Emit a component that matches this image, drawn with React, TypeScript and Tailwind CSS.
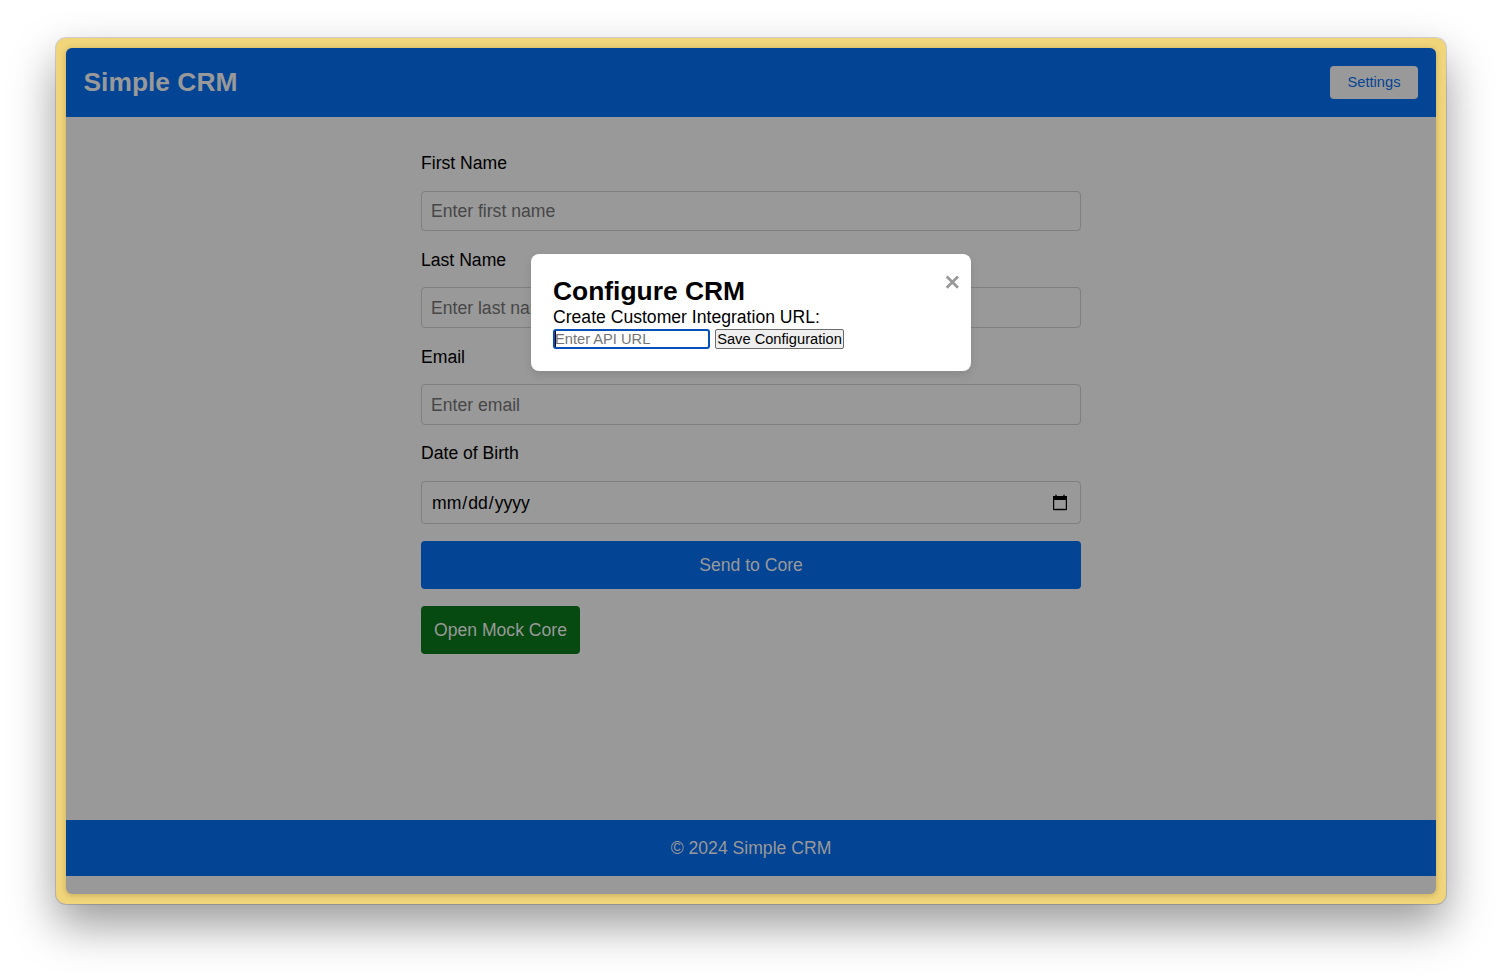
type FieldProps = {
  label: string;
  placeholder: string;
  labelClass: string;
  inputClass: string;
};

function Field({ label, placeholder, labelClass, inputClass }: FieldProps) {
  return (
    <div className="flex flex-col">
      <label className={`block leading-5 text-black ${labelClass}`}>{label}</label>
      <input
        type="text"
        placeholder={placeholder}
        className={`w-full rounded-[4px] border border-[#7f7f7f] bg-[#999999] px-[9px] text-[17.6px] placeholder:text-[#474747] outline-none ${inputClass}`}
      />
    </div>
  );
}

function CalendarIcon() {
  return (
    <svg width="16" height="18" viewBox="0 0 16 18" fill="none" shapeRendering="crispEdges">
      <path d="M3 0h2v1H3zM11 0h2v1h-2z" fill="#777" />
      <path d="M3 1h2v1H3zM11 1h2v1h-2z" fill="#333" />
      <path d="M1 2h14v4H1z" fill="#000" />
      <path d="M1 6h1v10H1zM14 6h1v10h-1zM1 15h14v1H1z" fill="#000" />
      <path d="M2 6h1v9H2zM13 6h1v9h-1zM2 14h12v1H2zM2 16h12v1H2z" fill="#777" />
    </svg>
  );
}

function ConfigureDialog() {
  return (
    <div
      role="dialog"
      className="absolute left-[465px] top-[206px] h-[117px] w-[440px] rounded-[8px] bg-white px-[22px] pt-[22px] text-black shadow-[0_4px_9px_rgba(0,0,0,0.1)]"
    >
      <h2 className="h-[31px] text-[26.4px] font-bold leading-[30px]">Configure CRM</h2>
      <label className="block h-[22px] text-[17.6px] leading-5">Create Customer Integration URL:</label>
      <div className="flex gap-[5px]">
        <div className="flex h-5 w-[157px] items-center rounded-[3px] border-2 border-[#0550b8] bg-white">
          <span className="h-4 w-px shrink-0 bg-black" />
          <input
            type="text"
            placeholder="Enter API URL"
            className="-ml-px h-4 w-full min-w-0 text-[14.667px] leading-4 placeholder:text-[#757575] outline-none"
          />
        </div>
        <button className="h-5 w-[129px] whitespace-nowrap rounded-[2px] border border-[#6b6b6b] bg-[#efefef] text-[14.667px] leading-[18px]">
          Save Configuration
        </button>
      </div>
      <button aria-label="Close" className="absolute right-[12px] top-[21px] flex size-[14px] items-center justify-center">
        <svg width="14" height="14" viewBox="0 0 14 14" fill="none" stroke="#999" strokeWidth="2.7">
          <path d="M1.7 1.5 13 12.8M13 1.5 1.7 12.8" />
        </svg>
      </button>
    </div>
  );
}

export default function App() {
  return (
    <div className="h-[978px] w-[1502px] overflow-hidden bg-white px-14 pt-[38px] font-['Liberation_Sans',Arial,sans-serif] text-[17.6px]">
      <div className="h-[866px] w-[1390px] rounded-[10px] bg-[#f1d57a] p-[10px] shadow-[0_0_0_1px_rgba(0,0,0,0.15),0_21px_46px_rgba(0,0,0,0.4)]">
        <div className="relative flex h-[846px] flex-col overflow-hidden rounded-[6px] bg-[#999999] shadow-[0_1px_6px_rgba(0,0,0,0.2)]">
          <header className="flex h-[69px] shrink-0 items-center justify-between bg-[#044495] px-[18px]">
            <h1 className="-ml-[0.5px] pb-px text-[26.4px] font-bold leading-[30px] text-[#999999]">Simple CRM</h1>
            <button className="h-[33px] w-[88px] rounded-[4px] bg-[#999999] pb-[2px] text-[14.667px] text-[#044495]">Settings</button>
          </header>

          <main className="flex flex-1 flex-col items-center pt-9">
            <form className="flex w-[660px] flex-col">
              <Field label="First Name" placeholder="Enter first name" labelClass="mb-[18px]" inputClass="h-10" />
              <Field label="Last Name" placeholder="Enter last name" labelClass="mt-[19px] mb-[17px]" inputClass="h-[41px] pt-[2px]" />
              <Field label="Email" placeholder="Enter email" labelClass="mt-[19px] mb-[17px]" inputClass="h-[41px] pt-[2px]" />
              <label className="mb-[18px] mt-[18px] block leading-5 text-black">Date of Birth</label>
              <div className="flex h-[43px] items-center justify-between rounded-[4px] border border-[#7f7f7f] pl-[10px] pr-3 text-black">
                <span className="flex pt-[2px]">
                  <span>mm</span>
                  <span className="px-px">/</span>
                  <span>dd</span>
                  <span className="px-px">/</span>
                  <span>yyyy</span>
                </span>
                <CalendarIcon />
              </div>
              <button type="button" className="mt-[17px] h-12 rounded-[4px] bg-[#044495] text-[#999999]">
                Send to Core
              </button>
              <button type="button" className="mt-[17px] h-12 w-[159px] rounded-[4px] bg-[#064a12] text-[#999999]">
                Open Mock Core
              </button>
            </form>
          </main>

          <footer className="flex h-14 shrink-0 items-center justify-center bg-[#044495] text-[#999999]">
            © 2024 Simple CRM
          </footer>
          <div className="h-[18px] shrink-0" />
          <ConfigureDialog />
        </div>
      </div>
    </div>
  );
}
